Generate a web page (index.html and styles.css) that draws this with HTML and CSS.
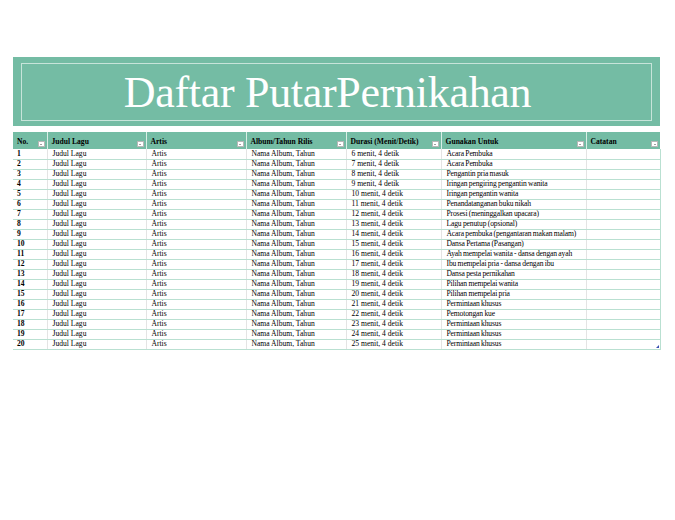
FILE: index.html
```html
<!DOCTYPE html>
<html lang="id">
<head>
<meta charset="utf-8">
<title>Daftar Putar Pernikahan</title>
<link rel="stylesheet" href="styles.css">
</head>
<body>
<div class="sheet">
  <header class="banner">
    <div class="banner-inner">
      <h1 class="title">Daftar PutarPernikahan</h1>
    </div>
  </header>
  <div class="table-wrap">
    <table class="playlist">
      <colgroup>
        <col class="c-no"><col class="c-judul"><col class="c-artis"><col class="c-album"><col class="c-durasi"><col class="c-guna"><col class="c-catatan">
      </colgroup>
      <thead>
        <tr>
          <th>No.<span class="dd"></span></th>
          <th>Judul Lagu<span class="dd"></span></th>
          <th>Artis<span class="dd"></span></th>
          <th>Album/Tahun Rilis<span class="dd"></span></th>
          <th>Durasi (Menit/Detik)<span class="dd"></span></th>
          <th>Gunakan Untuk<span class="dd"></span></th>
          <th>Catatan<span class="dd"></span></th>
        </tr>
      </thead>
      <tbody>
        <tr><td class="no">1</td><td>Judul Lagu</td><td>Artis</td><td>Nama Album, Tahun</td><td>6 menit, 4 detik</td><td class="guna">Acara Pembuka</td><td></td></tr>
        <tr><td class="no">2</td><td>Judul Lagu</td><td>Artis</td><td>Nama Album, Tahun</td><td>7 menit, 4 detik</td><td class="guna">Acara Pembuka</td><td></td></tr>
        <tr><td class="no">3</td><td>Judul Lagu</td><td>Artis</td><td>Nama Album, Tahun</td><td>8 menit, 4 detik</td><td class="guna">Pengantin pria masuk</td><td></td></tr>
        <tr><td class="no">4</td><td>Judul Lagu</td><td>Artis</td><td>Nama Album, Tahun</td><td>9 menit, 4 detik</td><td class="guna">Iringan pengiring pengantin wanita</td><td></td></tr>
        <tr><td class="no">5</td><td>Judul Lagu</td><td>Artis</td><td>Nama Album, Tahun</td><td>10 menit, 4 detik</td><td class="guna">Iringan pengantin wanita</td><td></td></tr>
        <tr><td class="no">6</td><td>Judul Lagu</td><td>Artis</td><td>Nama Album, Tahun</td><td>11 menit, 4 detik</td><td class="guna">Penandatanganan buku nikah</td><td></td></tr>
        <tr><td class="no">7</td><td>Judul Lagu</td><td>Artis</td><td>Nama Album, Tahun</td><td>12 menit, 4 detik</td><td class="guna">Prosesi (meninggalkan upacara)</td><td></td></tr>
        <tr><td class="no">8</td><td>Judul Lagu</td><td>Artis</td><td>Nama Album, Tahun</td><td>13 menit, 4 detik</td><td class="guna">Lagu penutup (opsional)</td><td></td></tr>
        <tr><td class="no">9</td><td>Judul Lagu</td><td>Artis</td><td>Nama Album, Tahun</td><td>14 menit, 4 detik</td><td class="guna">Acara pembuka (pengantaran makan malam)</td><td></td></tr>
        <tr><td class="no">10</td><td>Judul Lagu</td><td>Artis</td><td>Nama Album, Tahun</td><td>15 menit, 4 detik</td><td class="guna">Dansa Pertama (Pasangan)</td><td></td></tr>
        <tr><td class="no">11</td><td>Judul Lagu</td><td>Artis</td><td>Nama Album, Tahun</td><td>16 menit, 4 detik</td><td class="guna">Ayah mempelai wanita - dansa dengan ayah</td><td></td></tr>
        <tr><td class="no">12</td><td>Judul Lagu</td><td>Artis</td><td>Nama Album, Tahun</td><td>17 menit, 4 detik</td><td class="guna">Ibu mempelai pria - dansa dengan ibu</td><td></td></tr>
        <tr><td class="no">13</td><td>Judul Lagu</td><td>Artis</td><td>Nama Album, Tahun</td><td>18 menit, 4 detik</td><td class="guna">Dansa pesta pernikahan</td><td></td></tr>
        <tr><td class="no">14</td><td>Judul Lagu</td><td>Artis</td><td>Nama Album, Tahun</td><td>19 menit, 4 detik</td><td class="guna">Pilihan mempelai wanita</td><td></td></tr>
        <tr><td class="no">15</td><td>Judul Lagu</td><td>Artis</td><td>Nama Album, Tahun</td><td>20 menit, 4 detik</td><td class="guna">Pilihan mempelai pria</td><td></td></tr>
        <tr><td class="no">16</td><td>Judul Lagu</td><td>Artis</td><td>Nama Album, Tahun</td><td>21 menit, 4 detik</td><td class="guna">Permintaan khusus</td><td></td></tr>
        <tr><td class="no">17</td><td>Judul Lagu</td><td>Artis</td><td>Nama Album, Tahun</td><td>22 menit, 4 detik</td><td class="guna">Pemotongan kue</td><td></td></tr>
        <tr><td class="no">18</td><td>Judul Lagu</td><td>Artis</td><td>Nama Album, Tahun</td><td>23 menit, 4 detik</td><td class="guna">Permintaan khusus</td><td></td></tr>
        <tr><td class="no">19</td><td>Judul Lagu</td><td>Artis</td><td>Nama Album, Tahun</td><td>24 menit, 4 detik</td><td class="guna">Permintaan khusus</td><td></td></tr>
        <tr><td class="no">20</td><td>Judul Lagu</td><td>Artis</td><td>Nama Album, Tahun</td><td>25 menit, 4 detik</td><td class="guna">Permintaan khusus</td><td></td></tr>
      </tbody>
    </table>
    <span class="resize-handle"></span>
  </div>
</div>
</body>
</html>
```

FILE: styles.css
```css
html, body {
  margin: 0;
  padding: 0;
  background: #ffffff;
}

body {
  font-family: "Liberation Serif", "Times New Roman", serif;
  color: #000000;
}

.sheet {
  width: 647px;
  padding: 57px 0 0 13px;
}

.banner {
  height: 69px;
  background: #74bca4;
  display: flex;
  box-sizing: border-box;
  padding: 6px 8px 5px 8px;
}

.banner-inner {
  flex: 1;
  border: 1px solid rgba(255, 255, 255, 0.6);
  display: flex;
  align-items: center;
  justify-content: center;
  padding-right: 18px;
}

.title {
  margin: 0;
  font-family: "Liberation Serif", "Times New Roman", serif;
  font-weight: normal;
  font-size: 44px;
  line-height: 1;
  color: #ffffff;
  letter-spacing: -0.3px;
  padding-top: 2px;
}

.table-wrap {
  position: relative;
  margin-top: 6px;
}

.playlist {
  width: 647px;
  table-layout: fixed;
  border-collapse: collapse;
  font-size: 7.6px;
}

.c-no { width: 34px; }
.c-judul { width: 99px; }
.c-artis { width: 100px; }
.c-album { width: 100px; }
.c-durasi { width: 95px; }
.c-guna { width: 145px; }
.c-catatan { width: 74px; }

.playlist th {
  position: relative;
  height: 17px;
  padding: 1px 10px 0 4px;
  box-sizing: border-box;
  background: #74bca4;
  color: #000;
  font-weight: bold;
  font-size: 7.6px;
  text-align: left;
  white-space: nowrap;
  border-left: 1px solid #d9eee6;
}

.playlist th:first-child {
  border-left: none;
}

.dd {
  position: absolute;
  right: 2px;
  bottom: 2px;
  width: 7px;
  height: 6px;
  box-sizing: border-box;
  background: #ffffff;
  border: 1px solid #b7b7b7;
}

.dd::after {
  content: "";
  position: absolute;
  left: 1.5px;
  top: 1.5px;
  border-left: 1.5px solid transparent;
  border-right: 1.5px solid transparent;
  border-top: 1.5px solid #444;
}

.playlist td {
  height: 10px;
  padding: 0 4px 0 5px;
  box-sizing: border-box;
  line-height: 8px;
  white-space: nowrap;
  overflow: hidden;
  color: #000000;
  border-bottom: 1.6px solid #b9e0d1;
  border-left: 1px solid #e4e4e4;
  vertical-align: middle;
}

.playlist td.guna {
  letter-spacing: -0.15px;
  word-spacing: -0.3px;
}

.playlist td:first-child {
  border-left: none;
}

.playlist td:last-child {
  border-right: 1px solid #b9e0d1;
}

.playlist td.no {
  font-weight: bold;
  padding-left: 4px;
}

.resize-handle {
  position: absolute;
  right: 1px;
  bottom: 2px;
  width: 0;
  height: 0;
  border-left: 3px solid transparent;
  border-bottom: 3px solid #3a4fb0;
}
```
